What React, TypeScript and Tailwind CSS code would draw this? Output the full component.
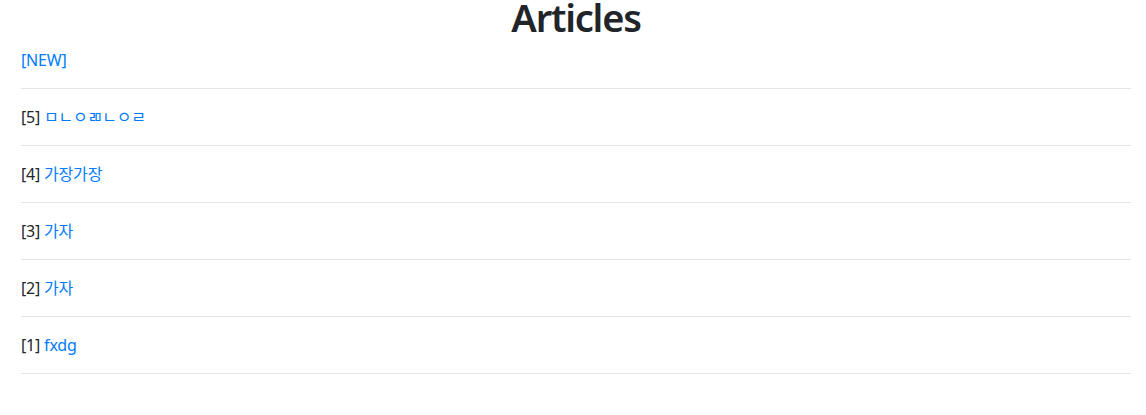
const articles = [
  { id: 5, title: "ㅁㄴㅇㄻㄴㅇㄹ" },
  { id: 4, title: "가장가장" },
  { id: 3, title: "가자" },
  { id: 2, title: "가자" },
  { id: 1, title: "fxdg" },
];

const font = {
  fontFamily: '"Segoe UI", "Noto Sans", "Noto Sans CJK KR", sans-serif',
};

export default function App() {
  return (
    <div className="min-h-screen bg-white text-[#212529]" style={font}>
      <div className="ml-[21px] w-[1110px]">
        <h1 className="h-12 text-center text-[38px] leading-[34px] font-semibold tracking-[-1.2px]">
          Articles
        </h1>
        <a href="#" className="block text-base leading-6 tracking-[-0.2px] text-[#007bff]">
          [NEW]
        </a>
        <hr className="my-4 border-t border-[#e5e5e5]" />
        {articles.map((a) => (
          <div key={a.id}>
            <div className="text-base leading-6 tracking-[-0.2px]">
              [{a.id}]{" "}
              <a href="#" className="text-[#007bff]">
                {a.title}
              </a>
            </div>
            <hr className="my-4 border-t border-[#e5e5e5]" />
          </div>
        ))}
      </div>
    </div>
  );
}
